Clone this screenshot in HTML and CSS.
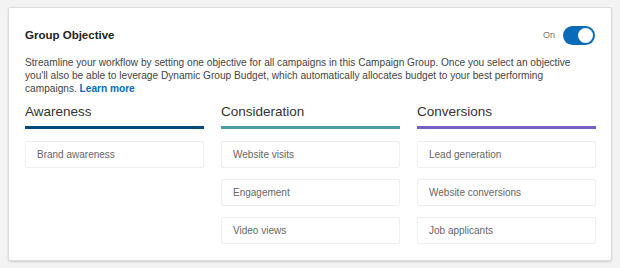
FILE: index.html
```html
<!DOCTYPE html>
<html lang="en">
<head>
    <meta charset="UTF-8">
    <meta name="viewport" content="width=device-width, initial-scale=1.0">
    <title>Group Objective</title>
    <link rel="stylesheet" href="styles.css">
</head>
<body>

<div class="card">
    <div class="card-header">
        <h2>Group Objective</h2>
        <div class="toggle-wrap">
            <span class="toggle-label">On</span>
            <span class="toggle"><span class="knob"></span></span>
        </div>
    </div>
    <p class="description">
        Streamline your workflow by setting one objective for all campaigns in this Campaign Group. Once you select an objective<br>
        you'll also be able to leverage Dynamic Group Budget, which automatically allocates budget to your best performing<br>
        campaigns. <a href="#">Learn more</a>
    </p>

    <div class="columns">
        <div class="column awareness">
            <h3>Awareness</h3>
            <ul>
                <li>Brand awareness</li>
            </ul>
        </div>
        <div class="column consideration">
            <h3>Consideration</h3>
            <ul>
                <li>Website visits</li>
                <li>Engagement</li>
                <li>Video views</li>
            </ul>
        </div>
        <div class="column conversions">
            <h3>Conversions</h3>
            <ul>
                <li>Lead generation</li>
                <li>Website conversions</li>
                <li>Job applicants</li>
            </ul>
        </div>
    </div>
</div>

</body>
</html>
```

FILE: styles.css
```css
body {
    font-family: "Liberation Sans", Arial, sans-serif;
    margin: 0;
    padding: 7px 8px;
    background-color: #f3f3f3;
}
.card {
    box-sizing: border-box;
    width: 604px;
    height: 254px;
    padding: 16px 15px 0 16px;
    background-color: white;
    border: 1px solid #dcdcdc;
    border-radius: 2px;
    box-shadow: 0 1px 2px rgba(0, 0, 0, 0.15);
}
.card-header {
    display: flex;
    justify-content: space-between;
    align-items: center;
    height: 22px;
}
h2 {
    margin: 0;
    font-size: 11.5px;
    font-weight: bold;
    color: #222;
}
.toggle-wrap {
    display: flex;
    align-items: center;
    gap: 8px;
    margin-right: 1px;
}
.toggle-label {
    font-size: 9px;
    color: #777;
}
.toggle {
    display: flex;
    justify-content: flex-end;
    align-items: center;
    width: 32px;
    height: 19px;
    padding: 0 2px;
    box-sizing: border-box;
    border-radius: 10px;
    background-color: #0a6bb8;
}
.knob {
    width: 15px;
    height: 15px;
    border-radius: 50%;
    background-color: white;
}
.description {
    margin: 10px 0 0;
    font-size: 10.15px;
    line-height: 13px;
    color: #444;
    white-space: nowrap;
}
.description a {
    color: #0a6bb8;
    font-weight: bold;
    text-decoration: none;
}
.columns {
    display: flex;
    gap: 17px;
    margin-top: 9px;
}
.column {
    width: 179px;
}
h3 {
    margin: 0;
    padding-bottom: 6px;
    font-size: 13.5px;
    line-height: 16px;
    font-weight: normal;
    color: #333;
    border-bottom: 3px solid #004b7c;
}
.consideration h3 {
    border-bottom-color: #4a9fa5;
}
.conversions h3 {
    border-bottom-color: #7660c8;
}
.column ul {
    list-style-type: none;
    padding-left: 0;
    margin: 12px 0 0;
    display: flex;
    flex-direction: column;
    gap: 11px;
}
.column li {
    height: 25px;
    line-height: 25px;
    padding-left: 11px;
    font-size: 10px;
    color: #666;
    border: 1px solid #efefef;
    border-radius: 2px;
}
```
